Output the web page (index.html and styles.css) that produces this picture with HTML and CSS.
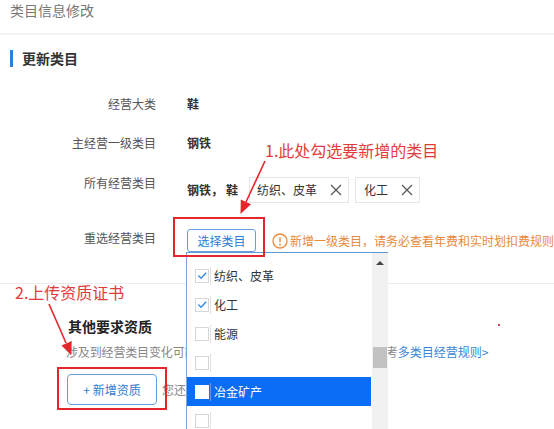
FILE: index.html
```html
<!DOCTYPE html>
<html lang="zh-CN">
<head>
<meta charset="utf-8">
<title>类目信息修改</title>
<link rel="stylesheet" href="styles.css">
</head>
<body>
<div class="page">
  <header class="topbar"><span class="title">类目信息修改</span></header>

  <section class="update">
    <h2 class="sec-title">更新类目</h2>
    <div class="form">
      <div class="row r1"><span class="label">经营大类</span><span class="value">鞋</span></div>
      <div class="row r2"><span class="label">主经营一级类目</span><span class="value">钢铁</span></div>
      <div class="row r3">
        <span class="label">所有经营类目</span>
        <div class="value tags">
          <span class="plain">钢铁<span class="comma">，</span>鞋</span>
          <span class="tag">纺织、皮革<svg class="x" viewBox="0 0 12 12"><path d="M1 1L11 11M11 1L1 11"/></svg></span>
          <span class="tag">化工<svg class="x" viewBox="0 0 12 12"><path d="M1 1L11 11M11 1L1 11"/></svg></span>
        </div>
      </div>
      <div class="row r4">
        <span class="label">重选经营类目</span>
        <div class="value pick">
          <button class="btn btn-select">选择类目</button>
          <span class="warn"><svg class="warn-ico" viewBox="0 0 16 16"><circle cx="8" cy="8" r="7"/><path d="M8 4.2V9.4"/><circle class="dot" cx="8" cy="11.6" r="0.9"/></svg>新增一级类目，请务必查看年费和实时划扣费规则</span>
        </div>
      </div>
    </div>
  </section>

  <section class="other">
    <h3 class="other-title">其他要求资质</h3>
    <p class="note">涉及到经营类目变化可能需要补充相应的资质文件，具体请参考<a class="link">多类目经营规则&gt;</a></p>
    <div class="add-row"><button class="btn btn-add">+ 新增资质</button><span class="hint">您还可以</span></div>
  </section>

  <div class="dropdown">
    <ul class="list">
      <li class="item"><span class="cb checked"><svg viewBox="0 0 13 13"><path d="M2.5 6.5L5.5 9.5L11 3.5"/></svg></span><span class="txt">纺织、皮革</span></li>
      <li class="item"><span class="cb checked"><svg viewBox="0 0 13 13"><path d="M2.5 6.5L5.5 9.5L11 3.5"/></svg></span><span class="txt">化工</span></li>
      <li class="item"><span class="cb"></span><span class="txt">能源</span></li>
      <li class="item"><span class="cb"></span><span class="txt"></span></li>
      <li class="item active"><span class="cb"></span><span class="txt">冶金矿产</span></li>
      <li class="item"><span class="cb"></span><span class="txt"></span></li>
    </ul>
    <div class="scrollbar">
      <div class="sb-up"><span class="tri"></span></div>
      <div class="sb-thumb"></div>
    </div>
  </div>

  <div class="anno anno-text1">1.此处勾选要新增的类目</div>
  <div class="anno anno-text2">2.上传资质证书</div>
  <div class="anno-box box1"></div>
  <div class="anno-box box2"></div>
  <span class="red-dot"></span>
  <svg class="arrows" viewBox="0 0 554 429" width="554" height="429">
    <path class="arr-line" d="M265 161L246 202"/>
    <path class="arr-head" d="M240.5 214L240.8 199.5L251 204.2Z"/>
    <path class="arr-line" d="M49 304L66 343"/>
    <path class="arr-head" d="M71 355L61.5 345.5L71.8 341Z"/>
  </svg>
</div>
</body>
</html>
```

FILE: styles.css
```css
* { box-sizing: border-box; }
html, body { margin: 0; padding: 0; background: #fff; }
body {
  font-family: "Noto Sans CJK SC", "Noto Sans", sans-serif;
  font-size: 12px;
  color: #333;
}
.page {
  position: relative;
  width: 554px;
  height: 429px;
  overflow: hidden;
}

/* top bar */
.topbar {
  height: 35px;
  padding-left: 10px;
  border-bottom: 2px solid #f2f2f2;
}
.title {
  display: block;
  font-size: 14px;
  line-height: 20px;
  color: #777;
}

/* update section */
.update {
  padding-bottom: 31px;
  border-bottom: 1px solid #ececec;
}
.sec-title {
  margin: 15px 0 0 10px;
  height: 17px;
  line-height: 17px;
  border-left: 3px solid #2b7fe0;
  padding-left: 9px;
  font-size: 14px;
  font-weight: 700;
  color: #333;
}
.form { display: flex; flex-direction: column; }
.row { display: flex; align-items: flex-start; }
.r1 { margin-top: 27px; }
.r2 { margin-top: 19px; }
.r3 { margin-top: 20px; }
.r4 { margin-top: 25px; }
.label {
  width: 156px;
  flex: none;
  text-align: right;
  line-height: 20px;
  color: #555;
}
.value {
  margin-left: 31px;
  line-height: 20px;
  font-weight: 700;
  color: #333;
}
.tags {
  display: flex;
  align-items: center;
  margin-top: 4px;
  height: 26px;
}
.plain { margin-right: 11px; white-space: nowrap; }
.comma { margin: 0 3px 0 0; }
.tag {
  display: inline-flex;
  align-items: center;
  height: 26px;
  padding: 0 6px 0 7px;
  margin-right: 6px;
  border: 1px solid #e6e6e6;
  font-weight: 400;
  color: #333;
}
.tag + .tag { padding-left: 8px; }
.x {
  width: 12px;
  height: 12px;
  margin-left: 13px;
  fill: none;
  stroke: #555;
  stroke-width: 1.2;
}

.pick {
  display: flex;
  align-items: center;
  margin-top: 1px;
  font-weight: 400;
}
.btn {
  font-family: inherit;
  font-size: 12px;
  background: #fff;
  color: #2f7bd3;
  border: 1px solid #6aa1dc;
  border-radius: 3px;
  padding: 0;
  line-height: 1;
}
.btn-select { width: 69px; height: 23px; }
.warn {
  display: inline-flex;
  align-items: center;
  margin-left: 16px;
  color: #e8893a;
  white-space: nowrap;
  line-height: 20px;
}
.warn-ico {
  width: 16px;
  height: 16px;
  margin-right: 2px;
  fill: none;
  stroke: #e8893a;
  stroke-width: 1.3;
}
.warn-ico .dot { fill: #e8893a; stroke: none; }

/* other section */
.other { padding-left: 67px; }
.other-title {
  margin: 32px 0 0 1px;
  font-size: 14px;
  line-height: 20px;
  font-weight: 700;
  color: #222;
}
.note {
  margin: 6px 0 0 -1px;
  line-height: 20px;
  color: #888;
  white-space: nowrap;
  letter-spacing: -0.15px;
}
.link { color: #3a86d6; letter-spacing: 0; }
.add-row {
  display: flex;
  align-items: center;
  margin-top: 12px;
}
.btn-add { width: 90px; height: 31px; border-radius: 4px; }
.hint { margin-left: 5px; color: #888; white-space: nowrap; }

/* dropdown overlay */
.dropdown {
  position: absolute;
  left: 186px;
  top: 252px;
  width: 202px;
  height: 190px;
  display: flex;
  background: #fff;
  border-left: 1px solid #7aa7d8;
  border-top: 1px solid #5b97d3;
}
.list {
  list-style: none;
  margin: 0;
  padding: 8px 0 0;
  width: 184px;
  flex: none;
}
.item {
  display: flex;
  align-items: center;
  height: 29px;
  padding-left: 8px;
  color: #333;
}
.item.active { background: #0b6cf5; color: #fff; }
.cb {
  width: 14px;
  height: 14px;
  flex: none;
  border: 1px solid #d6d6d6;
  background: #fff;
  display: flex;
  align-items: center;
  justify-content: center;
}
.item.active .cb { border-color: #fff; }
.cb svg {
  width: 13px;
  height: 13px;
  fill: none;
  stroke: #3a8de3;
  stroke-width: 1.6;
}
.txt {
  margin-left: 1px;
  padding-left: 3px;
  border-left: 1px solid #e2e2e2;
  line-height: 18px;
  min-height: 18px;
}
.item.active .txt { border-left-color: #5b9bf7; }
.scrollbar {
  width: 16px;
  flex: none;
  margin-left: 1px;
  background: #f1f1f1;
}
.sb-up {
  height: 20px;
  display: flex;
  align-items: center;
  justify-content: center;
}
.tri {
  width: 0;
  height: 0;
  border-left: 4px solid transparent;
  border-right: 4px solid transparent;
  border-bottom: 4px solid #444;
}
.sb-thumb {
  margin: 74px 0 0 1px;
  width: 14px;
  height: 21px;
  background: #c2c2c2;
}

/* annotations */
.anno {
  position: absolute;
  font-size: 16px;
  line-height: 20px;
  color: #e23b3b;
  white-space: nowrap;
}
.anno-text1 { left: 265px; top: 140px; }
.anno-text2 { left: 15px; top: 282px; }
.anno-box {
  position: absolute;
  border: 2px solid #e5262b;
}
.box1 { left: 173px; top: 217px; width: 92px; height: 40px; }
.box2 { left: 57px; top: 367px; width: 110px; height: 43px; }
.red-dot {
  position: absolute;
  left: 498px;
  top: 324px;
  width: 2px;
  height: 2px;
  background: #d8404a;
}
.arrows {
  position: absolute;
  left: 0;
  top: 0;
  pointer-events: none;
}
.arr-line { stroke: #e5262b; stroke-width: 1.6; fill: none; }
.arr-head { fill: #e5262b; }
```
